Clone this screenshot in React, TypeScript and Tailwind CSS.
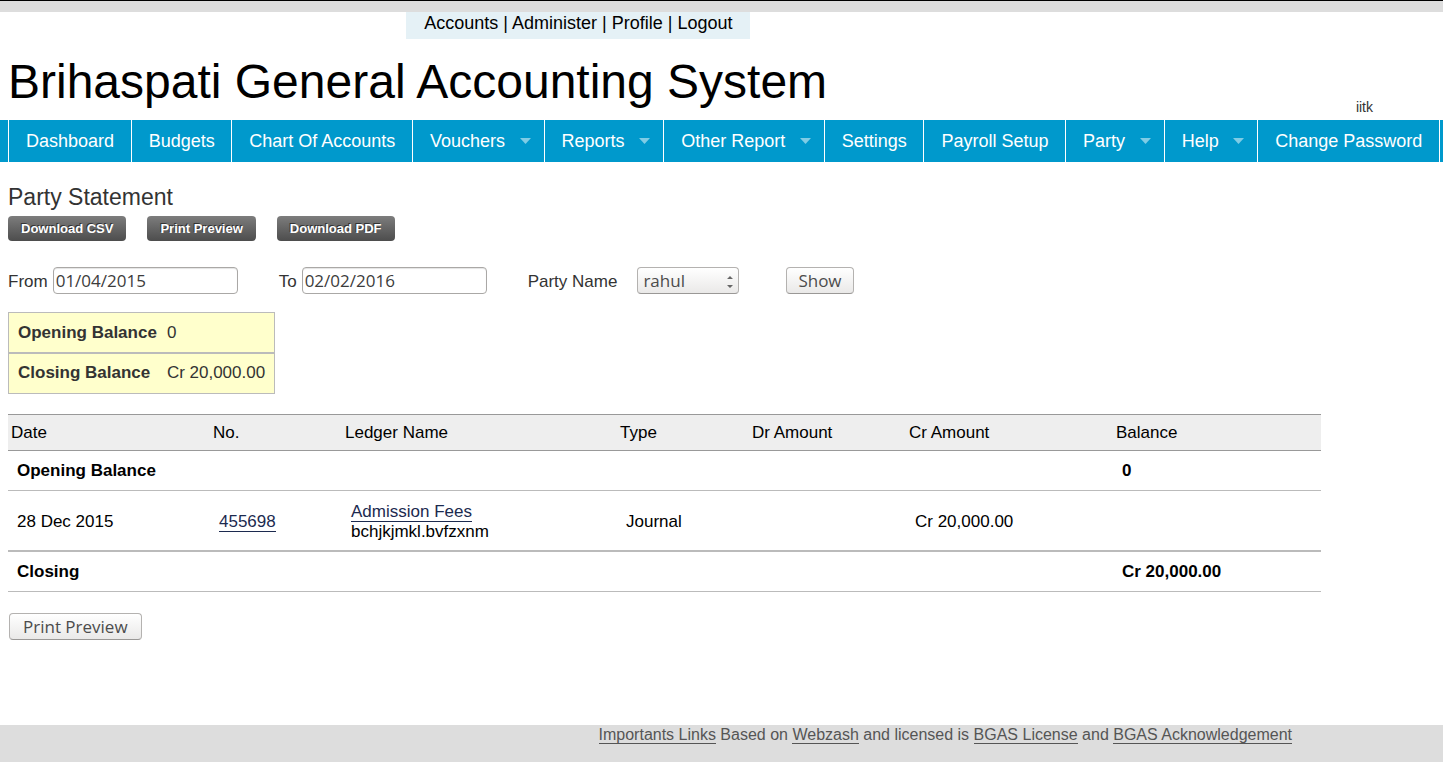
import React from "react";

const navItems = [
  { label: "Dashboard" },
  { label: "Budgets" },
  { label: "Chart Of Accounts" },
  { label: "Vouchers", menu: true },
  { label: "Reports", menu: true },
  { label: "Other Report", menu: true },
  { label: "Settings" },
  { label: "Payroll Setup" },
  { label: "Party", menu: true },
  { label: "Help", menu: true },
  { label: "Change Password" },
];

const softButton =
  "h-[27px] rounded-[4px] border border-[#b4b2b0] border-b-[#9a9896] bg-linear-to-b from-white to-[#eae9e8] font-['Open_Sans',sans-serif] text-[17px] leading-[24px] text-[#4c4c4c]";
const textInput =
  "h-[27px] w-[185px] rounded-[4px] border border-[#aaa8a6] bg-white px-[2px] font-['Open_Sans',sans-serif] text-[17px] leading-[24px] text-[#3c3c3c] shadow-[inset_0_1px_1px_#e4e4e4]";

function TopLinks() {
  const links = ["Accounts", "Administer", "Profile", "Logout"];
  return (
    <div className="ml-[28.15%] h-[27px] w-fit bg-[#e5f1f6] px-[18px] text-[18px] leading-[22px] text-black">
      {links.map((l, i) => (
        <React.Fragment key={l}>
          {i > 0 && " | "}
          <a href="#">{l}</a>
        </React.Fragment>
      ))}
    </div>
  );
}

function Nav() {
  return (
    <nav className="bg-[#0099cc] pr-[3px] pl-2">
      <ul className="flex border-r border-white">
        {navItems.map((n) => (
          <li key={n.label} className="grow border-l border-white">
            <a
              href="#"
              className={
                "flex h-[42px] items-center justify-between pl-[17px] text-[18px] leading-[20px] whitespace-nowrap text-white " +
                (n.menu ? "pr-[13px]" : "pr-[15px]")
              }
            >
              {n.label}
              {n.menu && (
                <svg className="ml-[13px]" width="11" height="6" viewBox="0 0 11 6" aria-hidden="true">
                  <path d="M0 0H11L5.5 6Z" fill="#7fcce5" />
                </svg>
              )}
            </a>
          </li>
        ))}
      </ul>
    </nav>
  );
}

function DarkButton({ children }: { children: string }) {
  return (
    <button className="h-[25px] rounded-[4px] bg-linear-to-b from-[#7d7d7d] to-[#4d4d4d] px-[13px] text-[13px] leading-[25px] font-bold text-white [text-shadow:-1px_-1px_0_#333]">
      {children}
    </button>
  );
}

function Filters() {
  return (
    <form className="mt-[26px] flex items-center" onSubmit={(e) => e.preventDefault()}>
      <label htmlFor="from" className="mr-[5px] pt-[2px]">From</label>
      <input id="from" className={textInput} defaultValue="01/04/2015" />
      <label htmlFor="to" className="mr-[5px] ml-[41px] pt-[2px]">To</label>
      <input id="to" className={textInput} defaultValue="02/02/2016" />
      <label htmlFor="party" className="mr-[20px] ml-[41px] pt-[2px]">Party Name</label>
      <div className="relative">
        <select
          id="party"
          className="block h-[27px] w-[102px] appearance-none rounded-[4px] border border-[#b4b2b0] border-b-[#9a9896] bg-linear-to-b from-white to-[#eae9e8] px-[5px] font-['Open_Sans',sans-serif] text-[17px] leading-[24px] text-[#4c4c4c]"
        >
          <option>rahul</option>
        </select>
        <svg className="pointer-events-none absolute top-2 right-[6px]" width="6" height="13" viewBox="0 0 6 13" aria-hidden="true">
          <path d="M0 4L3 1L6 4ZM0 10H6L3 13Z" fill="#666" />
        </svg>
      </div>
      <button className={softButton + " ml-[47px] px-[11px]"}>Show</button>
    </form>
  );
}

function Summary() {
  return (
    <table className="mt-[18px] border-collapse border border-[#bbb] bg-[#ffffcc]">
      <tbody>
        <tr className="h-[40px] border-b-2 border-[#bbb]">
          <th scope="row" className="pt-[2px] pr-[10px] pl-[9px] text-left">Opening Balance</th>
          <td className="pt-[2px] pr-[9px]">0</td>
        </tr>
        <tr className="h-[41px]">
          <th scope="row" className="pr-[10px] pl-[9px] text-left">Closing Balance</th>
          <td className="pr-[9px]">Cr 20,000.00</td>
        </tr>
      </tbody>
    </table>
  );
}

function Statement() {
  const heads = ["Date", "No.", "Ledger Name", "Type", "Dr Amount", "Cr Amount", "Balance"];
  return (
    <table className="mt-[20px] w-[92%] table-fixed border-collapse text-left text-black [&_td]:px-[9px]">
      <colgroup>
        <col className="w-[202px]" />
        <col className="w-[132px]" />
        <col className="w-[275px]" />
        <col className="w-[132px]" />
        <col className="w-[157px]" />
        <col className="w-[207px]" />
        <col className="w-[208px]" />
      </colgroup>
      <thead>
        <tr className="h-[36px] border-y border-[#999] bg-[#eee]">
          {heads.map((h) => (
            <th key={h} className="px-[3px] font-normal">{h}</th>
          ))}
        </tr>
      </thead>
      <tbody>
        <tr className="h-[40px] border-b border-[#bbb] font-bold">
          <td colSpan={6}>Opening Balance</td>
          <td>0</td>
        </tr>
        <tr className="h-[60px] border-b-2 border-[#bbb] [&>td]:pt-[3px]">
          <td>28 Dec 2015</td>
          <td>
            <a href="#" className="border-b border-[#1c2a4f] text-[#1c2a4f]">455698</a>
          </td>
          <td>
            <a href="#" className="border-b border-[#1c2a4f] text-[#1c2a4f]">Admission Fees</a>
            <br />
            bchjkjmkl.bvfzxnm
          </td>
          <td>Journal</td>
          <td></td>
          <td>Cr 20,000.00</td>
          <td></td>
        </tr>
        <tr className="h-[41px] border-b border-[#bbb] font-bold [&>td]:pt-[2px]">
          <td colSpan={6}>Closing</td>
          <td>Cr 20,000.00</td>
        </tr>
      </tbody>
    </table>
  );
}

function FootLink({ children }: { children: string }) {
  return <a href="#" className="border-b border-[#555]">{children}</a>;
}

export default function App() {
  return (
    <div className="flex min-h-screen flex-col bg-white font-['Liberation_Sans',Arial,sans-serif] text-[17px] leading-[20px] text-[#333]">
      <div className="h-3 border-t border-black bg-[#ddd]" />
      <header>
        <TopLinks />
        <div className="flex h-[81px] items-end justify-between pr-[70px] pl-2">
          <h1 className="pb-[10px] text-[48px] leading-[56px] text-black">Brihaspati General Accounting System</h1>
          <span className="pb-1 text-[14px] leading-[18px]">iitk</span>
        </div>
        <Nav />
      </header>
      <main className="grow px-2 pt-[20px]">
        <h2 className="text-[23px] leading-[30px]">Party Statement</h2>
        <div className="mt-1 flex gap-[21px]">
          <DarkButton>Download CSV</DarkButton>
          <DarkButton>Print Preview</DarkButton>
          <DarkButton>Download PDF</DarkButton>
        </div>
        <Filters />
        <Summary />
        <Statement />
        <button className={softButton + " mt-[21px] ml-px px-[13px]"}>Print Preview</button>
      </main>
      <footer className="h-[37px] bg-[#ddd] pr-[151px] text-right text-[16px] leading-[20px] text-[#555]">
        <FootLink>Importants Links</FootLink> Based on <FootLink>Webzash</FootLink> and licensed is{" "}
        <FootLink>BGAS License</FootLink> and <FootLink>BGAS Acknowledgement</FootLink>
      </footer>
    </div>
  );
}
